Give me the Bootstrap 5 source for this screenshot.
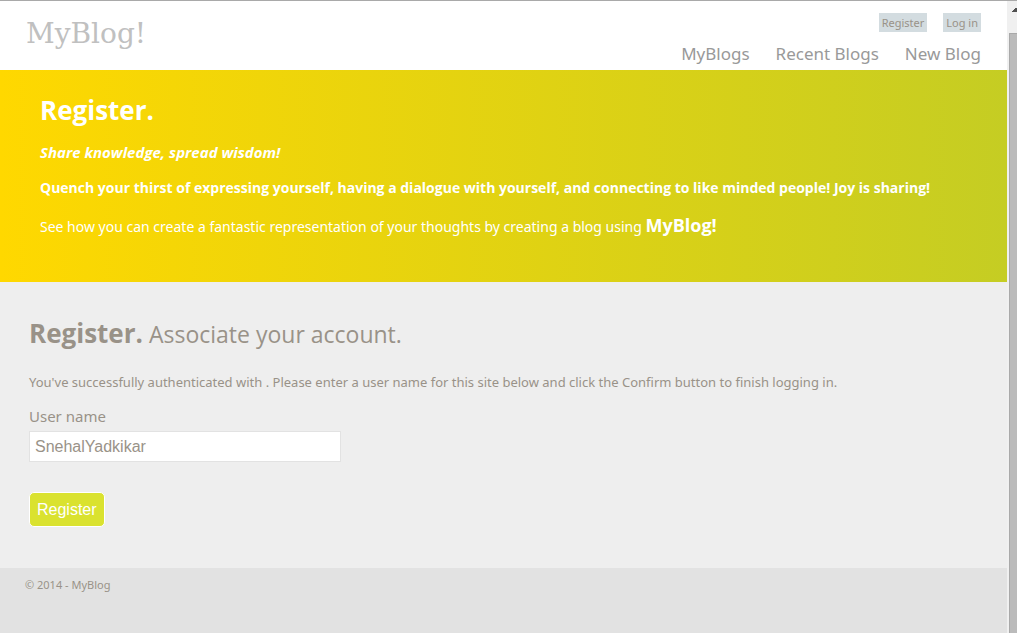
<!DOCTYPE html>
<html lang="en">
<head>
<meta charset="utf-8">
<meta name="viewport" content="width=device-width, initial-scale=1">
<title>Register - MyBlog</title>
<link href="https://cdn.jsdelivr.net/npm/bootstrap@5.3.0/dist/css/bootstrap.min.css" rel="stylesheet">
<style>
  body { font-family: "Noto Sans", "Open Sans", sans-serif; font-size: 14px; line-height: 20px; color: #999288; background: #eee; }
  a { color: #999; text-decoration: none; }
  .window-frame { border-top: 1px solid #a9a9a9; }
  .site-header { background: #fff; padding: 12px 26px 0; min-height: 69px; }
  .site-title { font-family: "DejaVu Serif", serif; font-size: 28px; line-height: 42px; color: #c0c0c0; }
  .account-links { gap: 16px; font-size: 11px; line-height: 19px; }
  .account-links a { display: block; background: #d3dce0; padding: 0 3px; color: #999288; }
  .site-menu { gap: 26px; font-size: 17px; line-height: 26px; padding-top: 9px; }
  .banner { background: linear-gradient(to right, #ffd800, #c5cd23); color: #fff; padding: 22px 40px 43px; }
  .banner h1 { font-family: "Open Sans", sans-serif; font-size: 26px; line-height: 36px; font-weight: 700; margin: 0 0 14px; }
  .banner p { font-size: 14px; line-height: 20px; margin: 0 0 15px; }
  .banner p:last-child { line-height: 24px; margin: 0; }
  .banner strong { font-family: "Open Sans", sans-serif; }
  .banner em { font-size: 15px; }
  .banner .brand-name { font-size: 18px; }
  .content { padding: 32px 29px 41px; }
  .content h2 { font-family: "Open Sans", sans-serif; font-size: 23px; line-height: 38px; font-weight: 400; margin: 0 0 19px; }
  .content h2 strong { font-size: 26px; }
  .content .intro { font-size: 13px; margin: 0 0 14px; }
  .content label { display: block; font-size: 15px; line-height: 20px; margin-bottom: 5px; }
  .content .form-control, .content .btn { font-family: "Liberation Sans", Arial, sans-serif; font-size: 16px; line-height: 19px; }
  .content .form-control { max-width: 312px; padding: 5px; border: 1px solid #e2e2e2; border-radius: 0; color: #999288; margin-bottom: 30px; }
  .content .btn { padding: 7px; border: 1px solid #fff; border-radius: 5px; background: #dae22f; color: #fff; }
  .site-footer { background: #e2e2e2; padding: 7px 25px; font-size: 11px; }
  .scroll-track { width: 10px; background: #f0f0f0; }
  .scroll-up { height: 32px; padding: 7px 0 0 5px; }
  .scroll-up svg { display: block; }
  .scroll-thumb { margin-left: 2px; background: #bbb; border: solid #a9a9a9; border-width: 1px 0 0 1px; }
</style>
</head>
<body>
<div class="window-frame d-flex min-vh-100 overflow-hidden">
  <div class="d-flex flex-column flex-grow-1">
    <header class="site-header d-flex justify-content-between">
      <a class="site-title" href="#">MyBlog!</a>
      <div class="d-flex flex-column align-items-end">
        <nav class="account-links d-flex" aria-label="Account">
          <a href="#">Register</a>
          <a href="#">Log in</a>
        </nav>
        <nav class="site-menu d-flex" aria-label="Main">
          <a href="#">MyBlogs</a>
          <a href="#">Recent Blogs</a>
          <a href="#">New Blog</a>
        </nav>
      </div>
    </header>
    <section class="banner">
      <h1>Register.</h1>
      <p><strong><em>Share knowledge, spread wisdom!</em></strong></p>
      <p><strong>Quench your thirst of expressing yourself, having a dialogue with yourself, and connecting to like minded people! Joy is sharing!</strong></p>
      <p>See how you can create a fantastic representation of your thoughts by creating a blog using <strong class="brand-name">MyBlog!</strong></p>
    </section>
    <main class="content">
      <h2><strong>Register.</strong> Associate your account.</h2>
      <p class="intro">You've successfully authenticated with . Please enter a user name for this site below and click the Confirm button to finish logging in.</p>
      <form>
        <label for="username">User name</label>
        <input class="form-control" type="text" id="username" value="SnehalYadkikar">
        <button class="btn" type="button">Register</button>
      </form>
    </main>
    <footer class="site-footer flex-grow-1">© 2014 - MyBlog</footer>
  </div>
  <div class="scroll-track d-flex flex-column flex-shrink-0" aria-hidden="true">
    <div class="scroll-up"><svg width="5" height="4" viewBox="0 0 5 4"><path d="M0 4V3h1V2h1V1h1V0h2v4z" fill="#505050"/></svg></div>
    <div class="scroll-thumb flex-grow-1"></div>
  </div>
</div>
<script src="https://cdn.jsdelivr.net/npm/bootstrap@5.3.0/dist/js/bootstrap.bundle.min.js"></script>
</body>
</html>
